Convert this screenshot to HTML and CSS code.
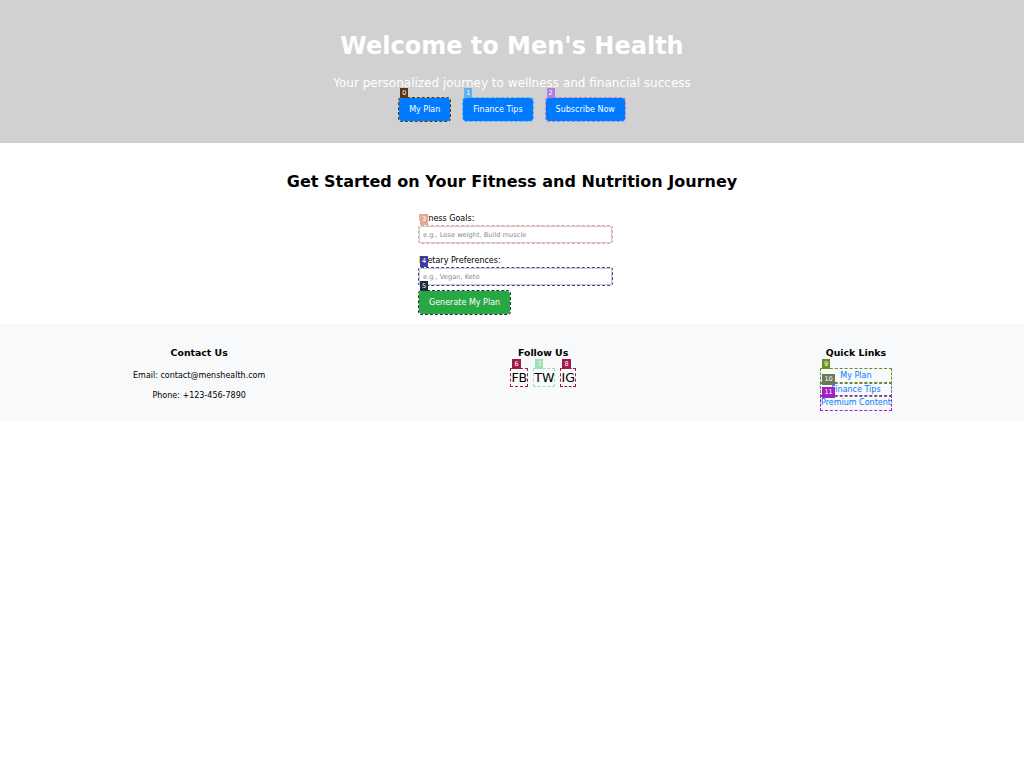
FILE: index.html
```html
<!DOCTYPE html>
<html lang="en">
<head>
<meta charset="utf-8">
<title>Men's Health</title>
<link rel="stylesheet" href="styles.css">
</head>
<body>
<header class="hero">
  <h1 class="hero-title">Welcome to Men's Health</h1>
  <p class="hero-tagline">Your personalized journey to wellness and financial success</p>
  <nav class="hero-actions">
    <a class="btn mark m0" href="#">My Plan<span class="badge">0</span></a>
    <a class="btn mark m1" href="#">Finance Tips<span class="badge">1</span></a>
    <a class="btn mark m2" href="#">Subscribe Now<span class="badge">2</span></a>
  </nav>
</header>

<main class="starter">
  <h2 class="starter-title">Get Started on Your Fitness and Nutrition Journey</h2>
  <div class="form-wrap">
    <form class="plan-form">
      <label class="field-label" for="goals">Fitness Goals:</label>
      <div class="field field-first">
        <input class="text-input mark m3" id="goals" type="text" placeholder="e.g., Lose weight, Build muscle">
        <span class="badge b3">3</span>
      </div>
      <label class="field-label" for="diet">Dietary Preferences:</label>
      <div class="field">
        <input class="text-input mark m4" id="diet" type="text" placeholder="e.g., Vegan, Keto">
        <span class="badge b4">4</span>
      </div>
      <button class="btn btn-green mark m5" type="button">Generate My Plan<span class="badge">5</span></button>
    </form>
  </div>
</main>

<footer class="site-footer">
  <div class="footer-col">
    <h3 class="footer-title">Contact Us</h3>
    <p class="footer-text">Email: contact@menshealth.com</p>
    <p class="footer-text">Phone: +123-456-7890</p>
  </div>
  <div class="footer-col">
    <h3 class="footer-title">Follow Us</h3>
    <div class="socials">
      <a class="social mark m6" href="#">FB<span class="badge">6</span></a>
      <a class="social mark m7" href="#">TW<span class="badge">7</span></a>
      <a class="social mark m8" href="#">IG<span class="badge">8</span></a>
    </div>
  </div>
  <div class="footer-col">
    <h3 class="footer-title">Quick Links</h3>
    <ul class="quick-links">
      <li><a class="quick-link mark m9" href="#">My Plan<span class="badge">9</span></a></li>
      <li><a class="quick-link mark m10" href="#">Finance Tips<span class="badge">10</span></a></li>
      <li><a class="quick-link mark m11" href="#">Premium Content<span class="badge">11</span></a></li>
    </ul>
  </div>
</footer>
</body>
</html>
```

FILE: styles.css
```css
* { box-sizing: border-box; }

html, body {
  margin: 0;
  padding: 0;
  background: #ffffff;
  font-family: "DejaVu Sans", sans-serif;
  font-size: 8px;
  color: #000;
}

/* ---------- hero ---------- */
.hero {
  background: #d1d1d1;
  text-align: center;
  padding: 32px 20px 22px;
}
.hero-title {
  margin: 0 0 16px;
  font-size: 24px;
  line-height: 28px;
  font-weight: bold;
  color: #ffffff;
}
.hero-tagline {
  margin: 0 0 8px;
  font-size: 12px;
  line-height: 14px;
  color: #ffffff;
}
.hero-actions {
  display: flex;
  justify-content: center;
  gap: 13px;
}

.btn {
  position: relative;
  display: inline-block;
  background: #007bff;
  color: #fff;
  border: none;
  border-radius: 3px;
  padding: 6px 10px;
  font-family: "DejaVu Sans", sans-serif;
  font-size: 8px;
  line-height: 11px;
  text-decoration: none;
  cursor: pointer;
}
.btn-green {
  background: #28a745;
  margin-top: 6px;
}

/* ---------- form section ---------- */
.starter {
  padding: 29px 20px 10px;
  text-align: center;
}
.starter-title {
  margin: 0 0 22px;
  font-size: 16px;
  line-height: 19px;
  font-weight: bold;
}
.form-wrap {
  width: 200px;
  margin: 0 auto;
  text-align: left;
}
.plan-form {
  padding-left: 7px;
}
.field-label {
  display: block;
  font-size: 8px;
  line-height: 9px;
  padding-top: 1px;
  margin-bottom: 3px;
}
.field {
  position: relative;
}
.field-first {
  margin-bottom: 12px;
}
.text-input {
  display: block;
  width: 100%;
  height: 17px;
  padding: 0 3px;
  border: 1px solid #cccccc;
  border-radius: 2px;
  font-family: "DejaVu Sans", sans-serif;
  font-size: 6.67px;
  background: #fff;
}
.text-input::placeholder {
  color: #8a8a8a;
}

/* ---------- footer ---------- */
.site-footer {
  background: #f8f9fa;
  display: flex;
  justify-content: space-around;
  padding: 23px 10px 11px;
}
.footer-col {
  text-align: center;
}
.footer-title {
  margin: 0 0 11px;
  font-size: 9.36px;
  line-height: 11px;
  font-weight: bold;
}
.footer-text {
  margin: 0 0 6.5px;
  font-size: 8px;
  line-height: 13.5px;
}
.socials {
  display: flex;
  justify-content: center;
  gap: 7px;
}
.social {
  position: relative;
  display: inline-block;
  color: #000;
  text-decoration: none;
  font-size: 12.6px;
  line-height: 17px;
}
.quick-links {
  list-style: none;
  margin: 0;
  padding: 0;
}
.quick-link {
  position: relative;
  display: block;
  color: #007bff;
  text-decoration: none;
  font-size: 8px;
  line-height: 13.5px;
}

/* ---------- element marks (annotation overlay) ---------- */
.mark {
  outline: 1px dashed var(--mk);
  outline-offset: 0;
}
.badge {
  position: absolute;
  left: 1px;
  bottom: 100%;
  background: var(--mk);
  color: #fff;
  font-family: "DejaVu Sans", sans-serif;
  font-size: 6.5px;
  font-weight: normal;
  line-height: 10px;
  padding: 0 2px;
  text-align: center;
  white-space: nowrap;
}
.field .badge {
  bottom: auto;
  top: -12px;
  line-height: 11px;
}

.m0 { --mk: #5a3612; }
.m1 { --mk: #5db1ef; }
.m2 { --mk: #b07ee3; }
.m3, .b3 { --mk: #e2a99b; }
.m4, .b4 { --mk: #3d3d9e; }
.m5 { --mk: #1c2e3c; }
.m6 { --mk: #a2194b; }
.m7 { --mk: #9fe0b5; }
.m8 { --mk: #a2194b; }
.m9 { --mk: #6b8e23; }
.m10 { --mk: #6c7a5c; }
.m11 { --mk: #a321c2; }

.m10 .badge, .m11 .badge {
  bottom: auto;
  top: -9px;
  line-height: 11px;
  padding: 0 2.5px;
}
.m9 .badge { line-height: 10px; }
```
